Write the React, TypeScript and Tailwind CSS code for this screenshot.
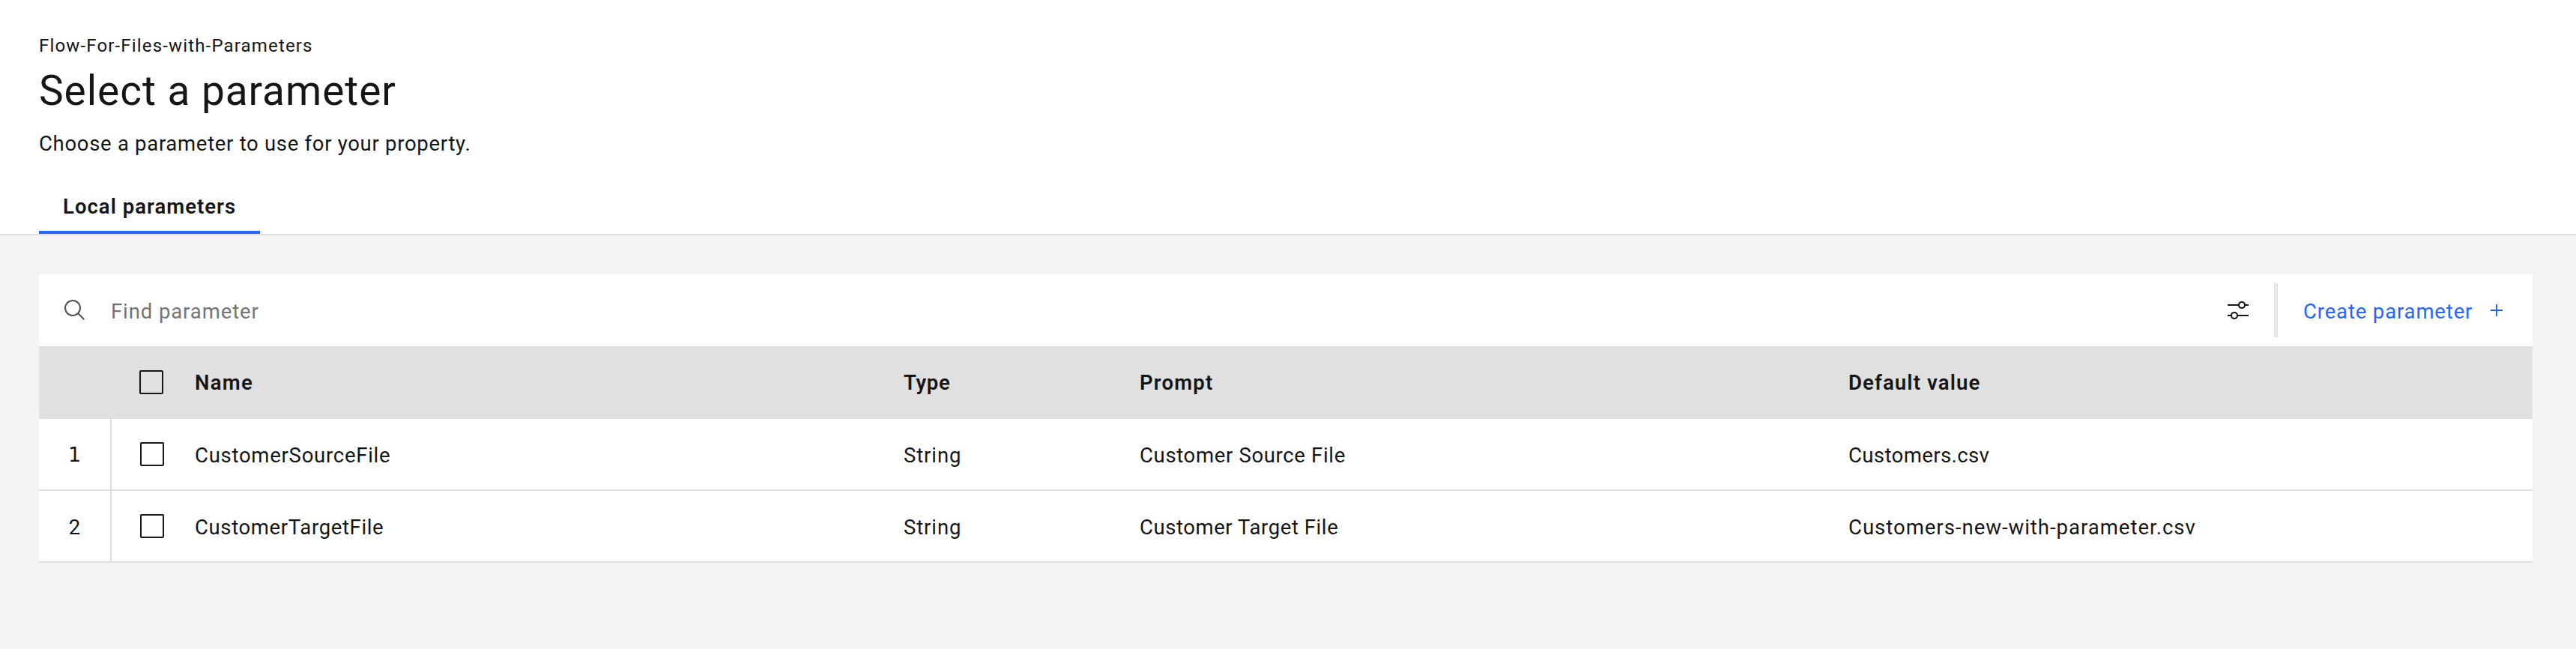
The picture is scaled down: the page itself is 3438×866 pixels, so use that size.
type Cell = { text: string; tracking: string };

const columns = [
  { text: "Name", width: "w-[946px]", tracking: "tracking-[1.29px]" },
  { text: "Type", width: "w-[315px]", tracking: "tracking-[0.67px]" },
  { text: "Prompt", width: "w-[946px]", tracking: "tracking-[1.18px]" },
  { text: "Default value", width: "flex-1", tracking: "tracking-[1.15px]" },
];

const rows: Cell[][] = [
  [
    { text: "CustomerSourceFile", tracking: "tracking-[0.74px]" },
    { text: "String", tracking: "tracking-[0.9px]" },
    { text: "Customer Source File", tracking: "tracking-[0.66px]" },
    { text: "Customers.csv", tracking: "tracking-[0.4px]" },
  ],
  [
    { text: "CustomerTargetFile", tracking: "tracking-[0.64px]" },
    { text: "String", tracking: "tracking-[0.9px]" },
    { text: "Customer Target File", tracking: "tracking-[0.57px]" },
    { text: "Customers-new-with-parameter.csv", tracking: "tracking-[1px]" },
  ],
];

function Checkbox({ label }: { label: string }) {
  return (
    <span
      role="checkbox"
      aria-checked="false"
      aria-label={label}
      className="block size-8 shrink-0 rounded-[2px] border-2 border-[#161616]"
    />
  );
}

function SearchIcon() {
  return (
    <svg width="32" height="32" viewBox="0 0 32 32" fill="#525252">
      <path d="M29,27.5859l-7.5521-7.5521a11.0177,11.0177,0,1,0-1.4141,1.4141L27.5859,29ZM4,13a9,9,0,1,1,9,9A9.01,9.01,0,0,1,4,13Z" />
    </svg>
  );
}

function SettingsAdjustIcon() {
  return (
    <svg width="32" height="32" viewBox="0 0 32 32" fill="#161616">
      <path d="M30,8H25.9a5,5,0,0,0-9.8,0H2v2H16.1a5,5,0,0,0,9.8,0H30ZM21,12a3,3,0,1,1,3-3A2.9465,2.9465,0,0,1,21,12Z" />
      <path d="M2,24H6.1a5,5,0,0,0,9.8,0H30V22H15.9a5,5,0,0,0-9.8,0H2Zm9-4a3,3,0,1,1-3,3A2.9465,2.9465,0,0,1,11,20Z" />
    </svg>
  );
}

export default function App() {
  return (
    <div className="h-[866px] w-full bg-[#f4f4f4] font-['Roboto',sans-serif] text-[27.5px] leading-9 text-[#161616]">
      <header className="flex h-[314px] flex-col items-start border-b-2 border-[#e0e0e0] bg-white pl-[52px] pt-[45px]">
        <p className="text-2xl leading-8 tracking-[1.16px]">Flow-For-Files-with-Parameters</p>
        <h1 className="mt-2 text-[55px] leading-[72px] tracking-[0.95px]">Select a parameter</h1>
        <p className="mt-[17px] tracking-[0.7px]">Choose a parameter to use for your property.</p>
        <nav className="mt-auto">
          <button className="flex h-[54px] w-[295px] items-start border-b-4 border-[#2466ff] pl-8 font-semibold leading-9 tracking-[1.03px]">
            Local parameters
          </button>
        </nav>
      </header>

      <main className="pl-[52px] pr-[58px] pt-[52px]">
        <div className="flex h-24 items-center bg-white">
          <div className="flex flex-1 items-center gap-8 pl-8">
            <SearchIcon />
            <span className="pt-[3px] tracking-[0.9px] text-[#757575]">Find parameter</span>
          </div>
          <SettingsAdjustIcon />
          <div className="ml-8 flex h-[72px] gap-px">
            <span className="w-[2px] bg-[#e0e0e0]" />
            <span className="w-[2px] bg-[#e0e0e0]" />
          </div>
          <button className="flex h-24 w-[340px] items-center justify-between pl-[34px] pr-8 text-[#2466ff]">
            <span className="pt-[3px] tracking-[0.85px]">Create parameter</span>
            <svg width="32" height="32" viewBox="0 0 32 32" fill="currentColor">
              <path d="M17 15V8h-2v7H8v2h7v7h2v-7h7v-2z" />
            </svg>
          </button>
        </div>

        <div className="flex h-[97px] items-center bg-[#e0e0e0] pb-px pl-[134px]">
          <Checkbox label="Select all parameters" />
          <div className="flex flex-1 pl-[42px] pt-[2px] font-semibold">
            {columns.map((c) => (
              <div key={c.text} className={`${c.width} ${c.tracking}`}>
                {c.text}
              </div>
            ))}
          </div>
        </div>

        {rows.map((cells, i) => (
          <div key={i} className="flex h-24 items-stretch bg-white">
            <div className="flex w-[97px] items-center justify-center border-r-2 border-[#e0e0e0] pb-[2px]">
              <span className={i === 0 ? "pt-px font-['DejaVu_Sans',sans-serif] text-[27px]" : "pt-[3px]"}>
                {i + 1}
              </span>
            </div>
            <div className="-ml-[97px] flex flex-1 items-center border-b-2 border-[#e0e0e0] pl-[135px]">
              <Checkbox label={`Select ${cells[0].text}`} />
              <div className="flex flex-1 pl-[41px] pt-[3px]">
                {cells.map((cell, j) => (
                  <div key={j} className={`${columns[j].width} ${cell.tracking}`}>
                    {cell.text}
                  </div>
                ))}
              </div>
            </div>
          </div>
        ))}
      </main>
    </div>
  );
}
